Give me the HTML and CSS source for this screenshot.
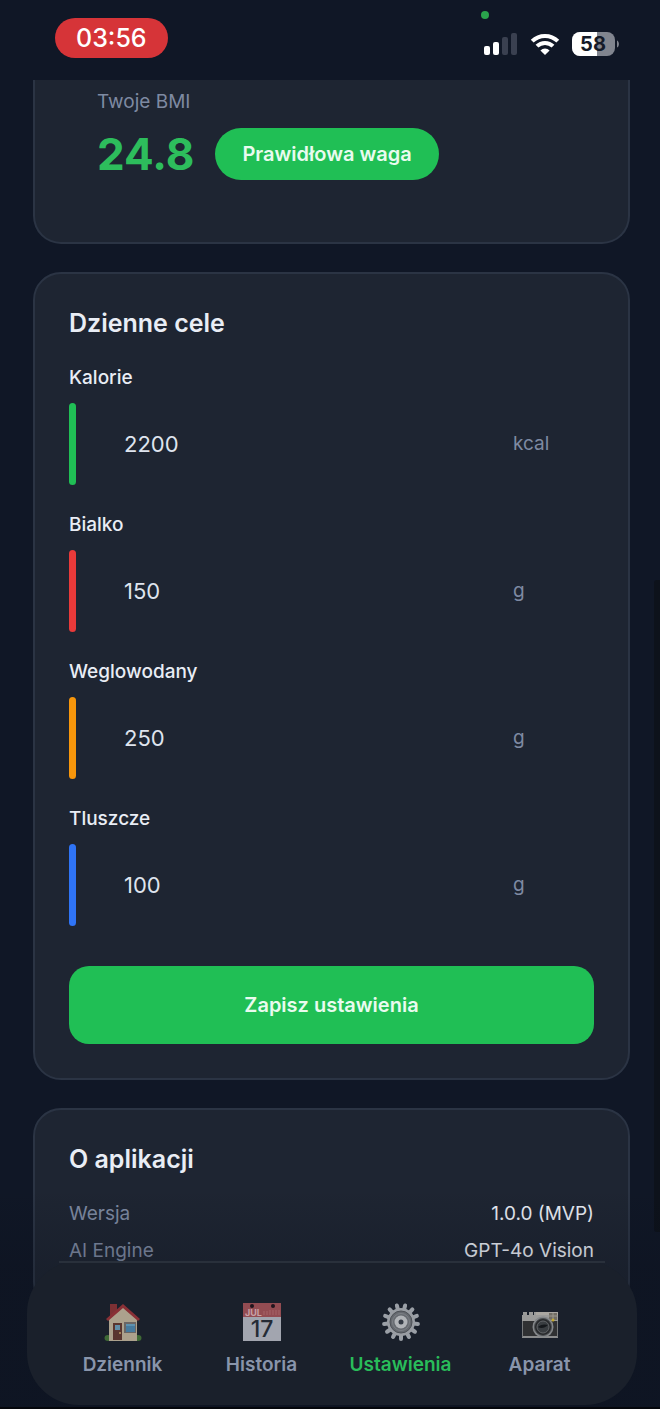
FILE: index.html
```html
<!DOCTYPE html>
<html lang="pl">
<head>
  <meta charset="UTF-8">
  <meta name="viewport" content="width=device-width, initial-scale=1">
  <title>Ustawienia</title>
  <link rel="stylesheet" href="styles.css">
</head>
<body>
  <header class="status-bar">
    <div class="time">03:56</div>
    <div class="camera-dot"></div>
    <div class="status-icons">
      <svg width="34" height="22" viewBox="0 0 34 22">
        <rect x="0" y="13" width="6" height="9" rx="2" fill="#fff"/>
        <rect x="9" y="9" width="6" height="13" rx="2" fill="#fff"/>
        <rect x="18" y="4" width="6" height="18" rx="2" fill="#3a4050"/>
        <rect x="27" y="0" width="6" height="22" rx="2" fill="#3a4050"/>
      </svg>
      <svg width="30" height="22" viewBox="0 0 30 22">
        <g fill="none" stroke="#fff" stroke-width="4">
          <path d="M2.2 8.2a18.1 18.1 0 0 1 25.6 0"/>
          <path d="M7 13.2a11.3 11.3 0 0 1 16 0"/>
        </g>
        <path d="M15 22l-4.6-4.6a6.5 6.5 0 0 1 9.2 0z" fill="#fff"/>
      </svg>
      <svg width="47" height="24" viewBox="0 0 47 24">
        <defs>
          <clipPath id="battery"><rect width="43" height="24" rx="8"/></clipPath>
        </defs>
        <g clip-path="url(#battery)">
          <rect width="43" height="24" fill="#81858f"/>
          <rect width="25" height="24" fill="#fff"/>
        </g>
        <path d="M45 8.5c2.600 1 2.600 6 0 7z" fill="#81858f"/>
        <text x="21" y="19" class="battery-text">58</text>
      </svg>
    </div>
  </header>

  <main class="content">
    <section class="card bmi">
      <div class="muted">Twoje BMI</div>
      <div class="bmi-row">
        <div class="bmi-value">24.8</div>
        <div class="badge">Prawidłowa waga</div>
      </div>
    </section>

    <form class="card">
      <h2>Dzienne cele</h2>
      <div class="fields">
        <div class="field">
          <label for="kcal">Kalorie</label>
          <div class="field-row green">
            <input id="kcal" type="text" inputmode="numeric" value="2200">
            <span class="unit">kcal</span>
          </div>
        </div>
        <div class="field">
          <label for="protein">Bialko</label>
          <div class="field-row red">
            <input id="protein" type="text" inputmode="numeric" value="150">
            <span class="unit">g</span>
          </div>
        </div>
        <div class="field">
          <label for="carbs">Weglowodany</label>
          <div class="field-row orange">
            <input id="carbs" type="text" inputmode="numeric" value="250">
            <span class="unit">g</span>
          </div>
        </div>
        <div class="field">
          <label for="fat">Tluszcze</label>
          <div class="field-row blue">
            <input id="fat" type="text" inputmode="numeric" value="100">
            <span class="unit">g</span>
          </div>
        </div>
      </div>
      <button type="button" class="save">Zapisz ustawienia</button>
    </form>

    <section class="card">
      <h2>O aplikacji</h2>
      <div class="info-row"><span class="muted">Wersja</span><span>1.0.0 (MVP)</span></div>
      <div class="info-row"><span class="muted">AI Engine</span><span>GPT-4o Vision</span></div>
    </section>
  </main>

  <div class="scroll-thumb"></div>
  <div class="bottom-shade"></div>

  <nav class="tab-bar">
    <a href="#dziennik" class="tab">
      <svg width="38" height="40" viewBox="0 0 38 40">
        <ellipse cx="4" cy="36" rx="3.5" ry="3" fill="#3f6a35"/>
        <ellipse cx="34" cy="36" rx="3.5" ry="3" fill="#3f6a35"/>
        <path d="M6 2h7v12H6z" fill="#7d3034"/>
        <path d="M5 17L19 5l14 12v22H5z" fill="#aca18d"/>
        <path d="M2 17L19 2l17 15-2 2L19 6 4 19z" fill="#8a3036"/>
        <path d="M9 21h9v17H9z" fill="#593530"/>
        <path d="M11 23h5v5h-5z" fill="#618da8"/>
        <circle cx="16" cy="31" r="1" fill="#b99b63"/>
        <path d="M20 20h12v11H20z" fill="#6a6665"/>
        <path d="M22 22h9v8h-9z" fill="#467a9e"/>
        <path d="M22 22h9v2h-9z" fill="#5d91b0"/>
      </svg>
      <span>Dziennik</span>
    </a>
    <a href="#historia" class="tab">
      <svg width="38" height="40" viewBox="0 0 38 40">
        <rect y="1" width="38" height="38" fill="#a2a5af"/>
        <rect y="1" width="38" height="14" fill="#934c52"/>
        <circle cx="9" cy="4" r="2" fill="#20151d"/>
        <circle cx="30" cy="4" r="2" fill="#20151d"/>
        <path d="M21 9v4M24 9v4M27 8v5M30 8v5M33 8v5M36 8v5" stroke="#a66468"/>
        <text x="2" y="14" class="cal-month">JUL</text>
        <text x="19" y="35" class="cal-day">17</text>
      </svg>
      <span>Historia</span>
    </a>
    <a href="#ustawienia" class="tab active">
      <svg width="38" height="40" viewBox="0 0 38 40">
        <g stroke="#9a9fa6" stroke-width="4" stroke-linecap="round">
          <path d="M19 20V3" transform="rotate(14 19 20)"/>
          <path d="M19 20V3" transform="rotate(42 19 20)"/>
          <path d="M19 20V3" transform="rotate(69 19 20)"/>
          <path d="M19 20V3" transform="rotate(97 19 20)"/>
          <path d="M19 20V3" transform="rotate(125 19 20)"/>
          <path d="M19 20V3" transform="rotate(152 19 20)"/>
          <path d="M19 20V3" transform="rotate(180 19 20)"/>
          <path d="M19 20V3" transform="rotate(208 19 20)"/>
          <path d="M19 20V3" transform="rotate(235 19 20)"/>
          <path d="M19 20V3" transform="rotate(263 19 20)"/>
          <path d="M19 20V3" transform="rotate(291 19 20)"/>
          <path d="M19 20V3" transform="rotate(318 19 20)"/>
          <path d="M19 20V3" transform="rotate(346 19 20)"/>
        </g>
        <circle cx="19" cy="20" r="14" fill="#999da3"/>
        <circle cx="19" cy="20" r="11" fill="#666a70" stroke="#4d5157"/>
        <circle cx="19" cy="20" r="8.5" fill="none" stroke="#7d8187"/>
        <circle cx="19" cy="20" r="6.5" fill="#b1b4b8"/>
        <circle cx="19" cy="20" r="2.5" fill="#343b45"/>
      </svg>
      <span>Ustawienia</span>
    </a>
    <a href="#aparat" class="tab">
      <svg width="38" height="40" viewBox="0 0 38 40">
        <path d="M2 10h4v3H2zM8 10h4v3H8zM13 10h2v3h-2z" fill="#9a9a99"/>
        <path d="M15 10h22v4H15z" fill="#aaa7a2"/>
        <rect x="1" y="13" width="36" height="7" fill="#9b9b9a"/>
        <rect x="28" y="11" width="8" height="7" fill="#706c64"/>
        <path d="M28 14h8M32 11v7" stroke="#9b978d"/>
        <rect x="1" y="19" width="36" height="16" fill="#303133"/>
        <path d="M1 35h36" stroke="#8b8c8d" stroke-width="2"/>
        <path d="M1.500 19v16M36.500 19v16" stroke="#77797b"/>
        <circle cx="22" cy="25" r="10.5" fill="#84878a"/>
        <circle cx="22" cy="25" r="8.5" fill="#27292c" stroke="#4d5053"/>
        <circle cx="22" cy="25" r="6" fill="#393d41" stroke="#626568"/>
        <path d="M17 25c3-3 7-3 10-2-3 3-7 4-10 2z" fill="#15181c"/>
        <circle cx="32" cy="18" r="1.5" fill="#c2a72e"/>
      </svg>
      <span>Aparat</span>
    </a>
  </nav>
</body>
</html>
```
FILE: styles.css
```css
* {
  box-sizing: border-box;
  margin: 0;
  padding: 0;
}

body {
  position: relative;
  display: flex;
  flex-direction: column;
  height: 100vh;
  overflow: hidden;
  background-color: #101726;
  color: #e9edf5;
  font-family: Inter, "Liberation Sans", sans-serif;
  font-size: 19px;
  line-height: 28px;
}

/* status bar */
.status-bar {
  position: relative;
  display: flex;
  flex-shrink: 0;
  justify-content: space-between;
  align-items: flex-start;
  height: 80px;
  padding: 18px 41px 0 55px;
}

.time {
  padding: 0 21px;
  border-radius: 20px;
  background-color: #d63438;
  color: #fff;
  font-size: 25px;
  font-weight: 500;
  line-height: 40px;
}

.camera-dot {
  position: absolute;
  top: 11px;
  right: 171px;
  width: 8px;
  height: 8px;
  border-radius: 50%;
  background-color: #2aa44c;
}

.status-icons {
  display: flex;
  align-items: center;
  gap: 12px;
  padding-top: 14px;
}

.battery-text {
  fill: #141a28;
  font-size: 20px;
  font-weight: 700;
  text-anchor: middle;
}

/* cards */
.content {
  display: flex;
  flex: 1;
  flex-direction: column;
  gap: 28px;
  min-height: 0;
  padding: 0 30px 0 33px;
  overflow: hidden;
}

.card {
  flex-shrink: 0;
  padding: 34px;
  border: 2px solid #2b3444;
  border-radius: 28px;
  background-color: #1e2532;
}

h2 {
  margin-bottom: 26px;
  font-size: 25px;
  font-weight: 600;
  line-height: 30px;
}

.muted,
.unit {
  color: #7e8aa2;
}

.bmi {
  padding: 8px 62px 62px;
  border-top: none;
  border-radius: 0 0 28px 28px;
}

.bmi-row {
  display: flex;
  align-items: center;
  gap: 21px;
  margin-top: 12px;
}

.bmi-value {
  color: #2dbd5c;
  font-size: 44px;
  font-weight: 700;
}

.badge {
  padding: 0 27px;
  border-radius: 26px;
  background-color: #20bf55;
  color: #e9fbef;
  font-size: 20px;
  font-weight: 600;
  line-height: 52px;
}

/* daily goals */
.fields {
  display: flex;
  flex-direction: column;
  gap: 26px;
}

.field label {
  display: block;
  margin-bottom: 11px;
  font-weight: 500;
}

.field-row {
  display: flex;
  align-items: center;
  height: 82px;
}

.field-row::before {
  content: "";
  width: 7px;
  height: 100%;
  border-radius: 4px;
  background-color: currentColor;
}

.field-row input {
  flex: 1;
  min-width: 0;
  padding-left: 48px;
  border: none;
  outline: none;
  background: none;
  color: #dfe4ee;
  font-family: inherit;
  font-size: 22px;
}

.unit {
  width: 81px;
}

.green { color: #20bf55; }
.red { color: #e93a3a; }
.orange { color: #f7960b; }
.blue { color: #2f74f6; }

.save {
  width: 100%;
  height: 78px;
  margin-top: 40px;
  border: none;
  border-radius: 20px;
  background-color: #20bf55;
  color: #e9fbef;
  font-family: inherit;
  font-size: 20px;
  font-weight: 600;
  cursor: pointer;
}

.info-row {
  display: flex;
  justify-content: space-between;
  margin-bottom: 9px;
}

.scroll-thumb {
  position: absolute;
  top: 580px;
  right: 0;
  width: 6px;
  height: 652px;
  border-radius: 3px 0 0 3px;
  background-color: #0d121b;
}

/* tab bar floats over the cards */
.bottom-shade {
  position: absolute;
  right: 0;
  bottom: 0;
  left: 0;
  height: 220px;
  border-bottom: 2px solid #05070c;
  background: linear-gradient(transparent, rgba(8, 12, 22, 0.2) 80px);
  pointer-events: none;
}

.tab-bar {
  position: absolute;
  right: 23px;
  bottom: 4px;
  left: 27px;
  display: grid;
  grid-template-columns: repeat(4, 1fr);
  height: 144px;
  padding: 41px 28px 0 26px;
  border-radius: 52px;
  background-color: #1a202b;
}

.tab-bar::before {
  content: "";
  position: absolute;
  top: 0;
  right: 32px;
  left: 32px;
  height: 2px;
  background-color: #29303b;
}

.tab {
  display: flex;
  flex-direction: column;
  align-items: center;
  gap: 9px;
  color: #8995ab;
  font-size: 19px;
  font-weight: 600;
  text-decoration: none;
}

.tab.active {
  color: #29bd5a;
}

.cal-month {
  fill: #c9a3a8;
  font-size: 9px;
  font-weight: 700;
}

.cal-day {
  fill: #252b36;
  font-size: 23px;
  font-weight: 500;
  text-anchor: middle;
}
```
